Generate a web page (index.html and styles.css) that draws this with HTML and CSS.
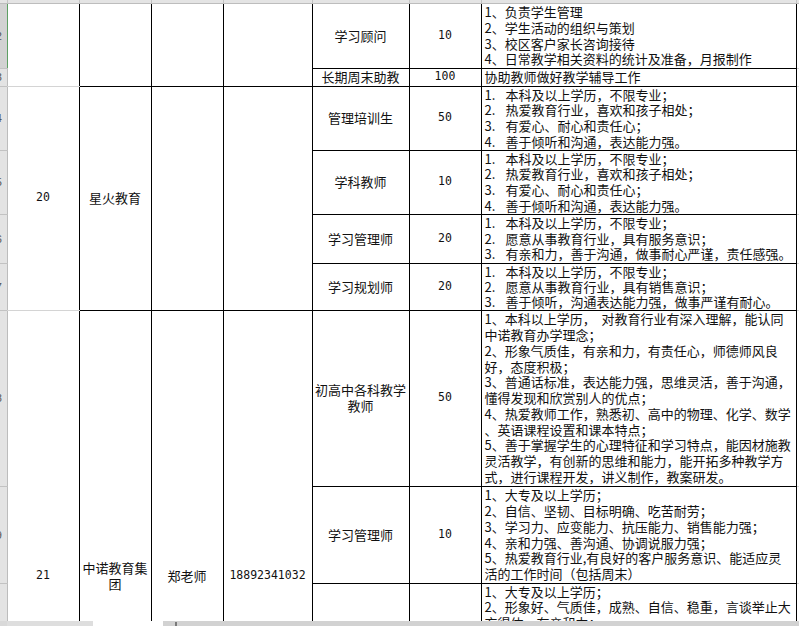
FILE: index.html
```html
<!DOCTYPE html>
<html lang="zh-CN">
<head>
<meta charset="utf-8">
<title>招聘信息表</title>
<link rel="stylesheet" href="styles.css">
</head>
<body>
<div class="sheet">
<table class="grid">
<colgroup>
<col class="w-rh"><col class="w-a"><col class="w-b"><col class="w-c"><col class="w-d"><col class="w-e"><col class="w-f"><col class="w-g"><col class="w-x">
</colgroup>
<tr class="hdr">
<td class="ch"></td><td class="ch"></td><td class="ch"></td><td class="ch"></td><td class="ch"></td><td class="ch"></td><td class="ch"></td><td class="ch"></td><td class="ch"></td>
</tr>
<tr class="r1">
<td class="rh sel"><div class="rn">42</div></td>
<td class="ca" rowspan="2"></td>
<td class="cm" rowspan="2"></td>
<td class="cm" rowspan="2"></td>
<td class="cm" rowspan="2"></td>
<td class="pos">学习顾问</td>
<td class="num">10</td>
<td class="req">1、负责学生管理<br>2、学生活动的组织与策划<br>3、校区客户家长咨询接待<br>4、日常教学相关资料的统计及准备，月报制作</td>
<td class="x"></td>
</tr>
<tr class="r2">
<td class="rh"><div class="rn">43</div></td>
<td class="pos">长期周末助教</td>
<td class="num">100</td>
<td class="req">协助教师做好教学辅导工作</td>
<td class="x"></td>
</tr>
<tr class="r3">
<td class="rh"><div class="rn">44</div></td>
<td class="ca num" rowspan="4">20</td>
<td class="cm" rowspan="4">星火教育</td>
<td class="cm" rowspan="4"></td>
<td class="cm" rowspan="4"></td>
<td class="pos">管理培训生</td>
<td class="num">50</td>
<td class="req"><span class="pf">1.</span>本科及以上学历，不限专业；<br><span class="pf">2.</span>热爱教育行业，喜欢和孩子相处；<br><span class="pf">3.</span>有爱心、耐心和责任心；<br><span class="pf">4.</span>善于倾听和沟通，表达能力强。</td>
<td class="x"></td>
</tr>
<tr class="r4">
<td class="rh"><div class="rn">45</div></td>
<td class="pos">学科教师</td>
<td class="num">10</td>
<td class="req"><span class="pf">1.</span>本科及以上学历，不限专业；<br><span class="pf">2.</span>热爱教育行业，喜欢和孩子相处；<br><span class="pf">3.</span>有爱心、耐心和责任心；<br><span class="pf">4.</span>善于倾听和沟通，表达能力强。</td>
<td class="x"></td>
</tr>
<tr class="r5">
<td class="rh"><div class="rn">46</div></td>
<td class="pos">学习管理师</td>
<td class="num">20</td>
<td class="req"><span class="pf">1.</span>本科及以上学历，不限专业；<br><span class="pf">2.</span>愿意从事教育行业，具有服务意识；<br><span class="pf">3.</span>有亲和力，善于沟通，做事耐心严谨，责任感强。</td>
<td class="x"></td>
</tr>
<tr class="r6">
<td class="rh"><div class="rn">47</div></td>
<td class="pos">学习规划师</td>
<td class="num">20</td>
<td class="req tight"><span class="pf">1.</span>本科及以上学历，不限专业；<br><span class="pf">2.</span>愿意从事教育行业，具有销售意识；<br><span class="pf">3.</span>善于倾听，沟通表达能力强，做事严谨有耐心。</td>
<td class="x"></td>
</tr>
<tr class="r7">
<td class="rh"><div class="rn">48</div></td>
<td class="ca num" rowspan="4">21</td>
<td class="cm co" rowspan="4">中诺教育集<br>团</td>
<td class="cm" rowspan="4">郑老师</td>
<td class="cm num" rowspan="4">18892341032</td>
<td class="pos"><span class="clip">初高中各科教学</span><br>教师</td>
<td class="num">50</td>
<td class="req">1、本科以上学历，&nbsp; 对教育行业有深入理解，能认同<br>中诺教育办学理念；<br>2、形象气质佳，有亲和力，有责任心，师德师风良<br>好，态度积极；<br>3、普通话标准，表达能力强，思维灵活，善于沟通，<br>懂得发现和欣赏别人的优点；<br>4、热爱教师工作，熟悉初、高中的物理、化学、数学<br>、英语课程设置和课本特点；<br>5、善于掌握学生的心理特征和学习特点，能因材施教<br>灵活教学，有创新的思维和能力，能开拓多种教学方<br>式，进行课程开发，讲义制作，教案研发。</td>
<td class="x"></td>
</tr>
<tr class="r8">
<td class="rh"><div class="rn">49</div></td>
<td class="pos">学习管理师</td>
<td class="num">10</td>
<td class="req">1、大专及以上学历；<br>2、自信、坚韧、目标明确、吃苦耐劳；<br>3、学习力、应变能力、抗压能力、销售能力强；<br>4、亲和力强、善沟通、协调说服力强；<br>5、热爱教育行业,有良好的客户服务意识、能适应灵<br>活的工作时间（包括周末）</td>
<td class="x"></td>
</tr>
<tr class="r9">
<td class="rh"><div class="rn">50</div></td>
<td class="pos"></td>
<td class="num"></td>
<td class="req top">1、大专及以上学历；<br>2、形象好、气质佳，成熟、自信、稳重，言谈举止大<br>方得体、有亲和力；</td>
<td class="x"></td>
</tr>
<tr class="r10">
<td class="rh"><div class="rn">51</div></td>
<td class="pos"></td>
<td class="num"></td>
<td class="req"></td>
<td class="x"></td>
</tr>
</table>
<div class="tabs">
<div class="tab-rh"></div>
<div class="tab-nav"></div>
<div class="tab-active"></div>
<div class="tab-rest"><span class="tab-mark"></span></div>
</div>
</div>
</body>
</html>
```
FILE: styles.css
```css
html, body {
  margin: 0;
  padding: 0;
  background: #ffffff;
}
body {
  font-family: "Noto Sans CJK SC", "Noto Sans CJK JP", sans-serif;
  font-size: 13px;
  color: #111111;
}
.sheet {
  position: relative;
  width: 799px;
  height: 626px;
  overflow: hidden;
  background: #ffffff;
}
.grid {
  border-collapse: collapse;
  table-layout: fixed;
  width: 816px;
}
.w-rh { width: 7px; }
.w-a { width: 72px; }
.w-b { width: 72px; }
.w-c { width: 72px; }
.w-d { width: 89px; }
.w-e { width: 97px; }
.w-f { width: 72px; }
.w-g { width: 315px; }
.w-x { width: 20px; }

.grid td {
  padding: 0;
  border: 0;
  border-right: 1px solid #000000;
  border-bottom: 1px solid #000000;
  overflow: hidden;
  vertical-align: middle;
  line-height: 15.75px;
  white-space: nowrap;
}

.hdr { height: 3px; }
.grid td.ch {
  height: 2px;
  line-height: 0;
  font-size: 0;
  background: #e4e4e4;
  border-right: 1px solid #c4c4c4;
  border-bottom: 1px solid #bdbdbd;
}

.r1 { height: 65px; }
.r2 { height: 18px; }
.r3 { height: 64px; }
.r4 { height: 64px; }
.r5 { height: 49px; }
.r6 { height: 47px; }
.r7 { height: 176px; }
.r8 { height: 97px; }
.r9 { height: 97px; }
.r10 { height: 162px; }

.grid td.rh {
  background: #e3e3e3;
  border-right: 1px solid #bcbcbc;
  border-bottom: 1px solid #c2c2c2;
}
.grid td.rh.sel {
  background: #d2d2d2;
  border-right: 1px solid #5e9f64;
}
.rn {
  width: 20px;
  margin-left: -18px;
  text-align: right;
  font-family: "Liberation Sans", sans-serif;
  font-size: 11px;
  line-height: 12px;
  color: #555555;
}

.grid td.ca {
  border-bottom: 1px solid #d4d4d4;
  text-align: center;
}
.cm {
  text-align: center;
}
.grid td.co {
  white-space: normal;
}
.pos {
  text-align: center;
}
.clip {
  display: inline-block;
  max-width: 96px;
  overflow: hidden;
  vertical-align: top;
  white-space: nowrap;
}
.num {
  text-align: center;
  font-family: "DejaVu Sans Mono", monospace;
  font-size: 11.5px;
}
.req {
  text-align: left;
  padding-left: 3px !important;
}
.grid td.tight {
  line-height: 15.2px;
}
.grid td.top {
  vertical-align: top;
}
.pf {
  display: inline-block;
  width: 21px;
}
.grid td.x {
  border-right: 0;
  border-bottom: 1px solid #d6d6d6;
}

.tabs {
  position: absolute;
  left: 0;
  right: 0;
  bottom: 0;
  height: 5px;
  display: flex;
  background: #d4d4d4;
}
.tab-rh {
  width: 7px;
  background: #d9d9d9;
}
.tab-nav {
  width: 86px;
  background: #dedede;
}
.tab-active {
  width: 70px;
  background: #ffffff;
}
.tab-rest {
  flex: 1;
  position: relative;
  background: #d2d2d2;
}
.tab-mark {
  position: absolute;
  left: 12px;
  top: 1px;
  width: 2px;
  height: 4px;
  background: #7a7a7a;
}
```
